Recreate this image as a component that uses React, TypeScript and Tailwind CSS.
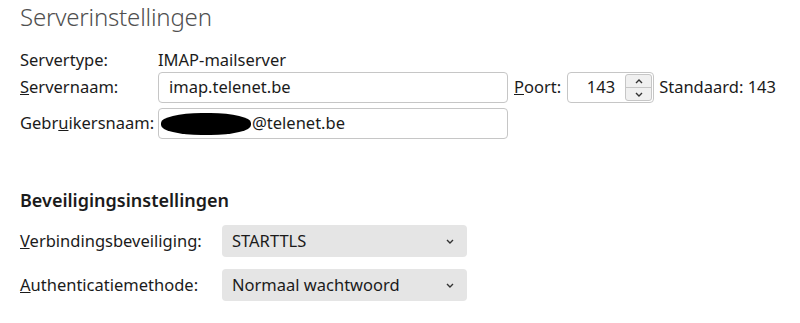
import React from 'react';

const font = { fontFamily: '"Noto Sans", "Open Sans", sans-serif' };

function Chevron({ up }: { up?: boolean }) {
  return (
    <svg width="8" height="5" viewBox="0 0 8 5" className={up ? 'rotate-180' : ''}>
      <path d="M1 1 L4 4 L7 1" fill="none" stroke="#333" strokeWidth="1.4" />
    </svg>
  );
}

function Select({ value }: { value: string }) {
  return (
    <div className="flex h-[32px] w-[245px] items-center justify-between rounded-[4px] bg-[#e5e5e5] pl-[10px] pr-[13px]">
      <span>{value}</span>
      <Chevron />
    </div>
  );
}

export default function App() {
  return (
    <div className="h-[323px] w-[800px] bg-white pl-[20px] text-[16.5px] leading-none text-[#1b1b1b]" style={font}>
      <h1 className="text-[24px] font-light leading-[33px] tracking-[-0.2px] text-[#505050]">Serverinstellingen</h1>

      <div className="mt-[15px] grid h-[24px] grid-cols-[138px_1fr] items-center">
        <span>Servertype:</span>
        <span>IMAP-mailserver</span>
      </div>

      <div className="flex items-center">
        <span className="w-[138px]"><u>S</u>ervernaam:</span>
        <div className="flex h-[31px] w-[350px] items-center rounded-[4px] border border-[#c6c6c6] px-[10px]">imap.telenet.be</div>
        <span className="ml-[6px]"><u>P</u>oort:</span>
        <div className="ml-[6px] flex h-[31px] w-[87px] items-center rounded-[4px] border border-[#c6c6c6] pr-[1px]">
          <span className="flex-1 pr-[10px] text-right">143</span>
          <div className="flex h-[27px] w-[27px] flex-col rounded-[3px] border border-[#c6c6c6] bg-[#f0f0f0]">
            <div className="flex flex-1 items-center justify-center border-b border-[#c6c6c6]"><Chevron up /></div>
            <div className="flex flex-1 items-center justify-center"><Chevron /></div>
          </div>
        </div>
        <span className="ml-[5px]">Standaard: 143</span>
      </div>

      <div className="mt-[5px] flex items-center">
        <span className="w-[138px]">Gebr<u>u</u>ikersnaam:</span>
        <div className="flex h-[31px] w-[350px] items-center rounded-[4px] border border-[#c6c6c6] pl-[2px]">
          <span className="mr-[1px] h-[22px] w-[90px] rounded-[45%] bg-black" />
          <span>@telenet.be</span>
        </div>
      </div>

      <h2 className="mt-[50px] text-[18px] font-semibold leading-[22px] text-[#1b1b1b]">Beveiligingsinstellingen</h2>

      <div className="mt-[14px] flex items-center">
        <span className="w-[202px]"><u>V</u>erbindingsbeveiliging:</span>
        <Select value="STARTTLS" />
      </div>
      <div className="mt-[12px] flex items-center">
        <span className="w-[202px]"><u>A</u>uthenticatiemethode:</span>
        <Select value="Normaal wachtwoord" />
      </div>
    </div>
  );
}
